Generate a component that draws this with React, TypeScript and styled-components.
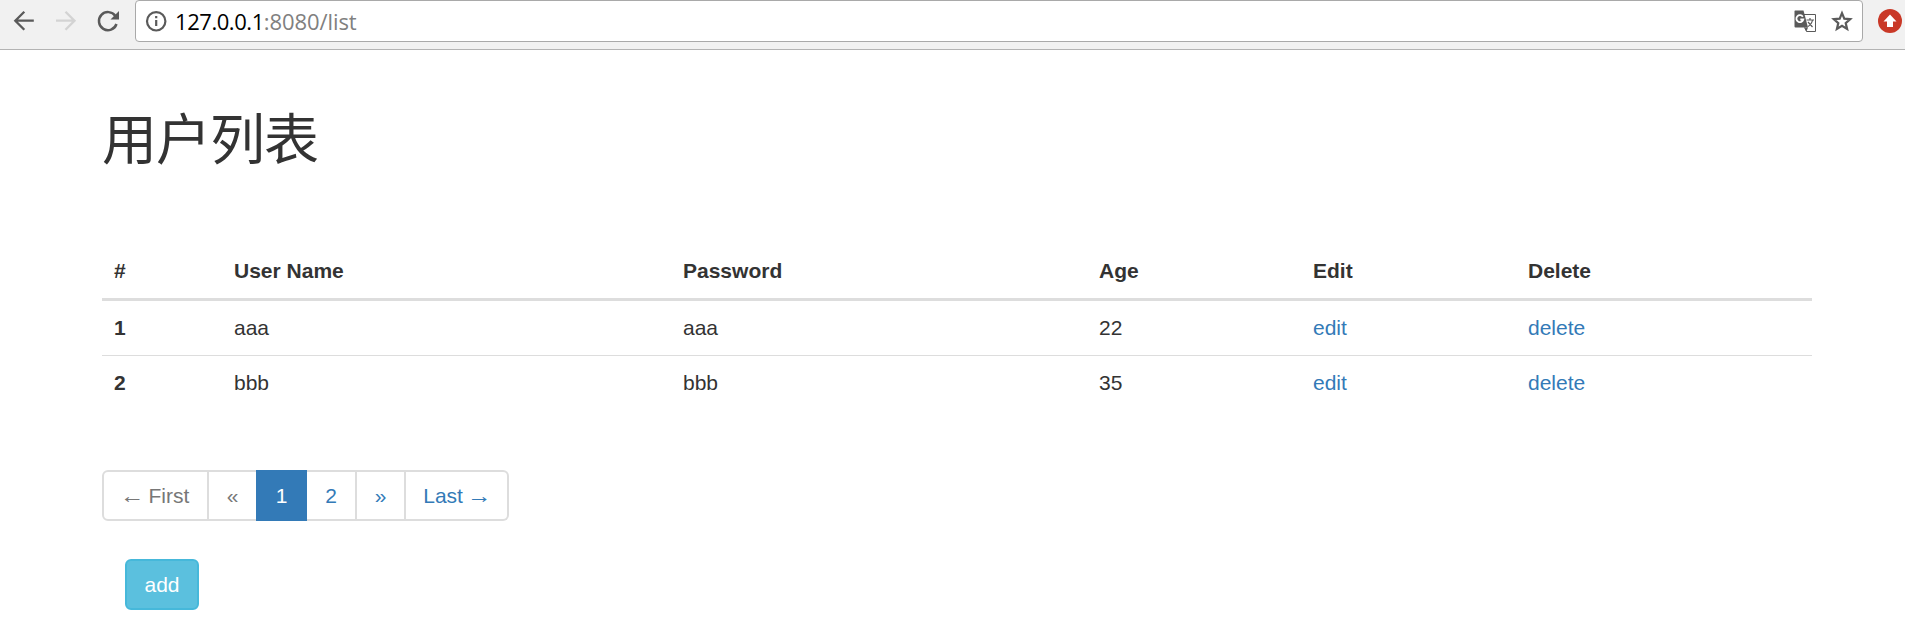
import React from "react";
import styled, { createGlobalStyle, css } from "styled-components";

const GlobalStyle = createGlobalStyle`
  * { box-sizing: border-box; }
  body {
    margin: 0;
    background: #fff;
    color: #333;
    font: 21px/30px "Liberation Sans", Arial, "Noto Sans CJK SC", sans-serif;
  }
`;

const BrowserBar = styled.header`
  display: flex;
  align-items: flex-start;
  height: 50px;
  background: #f1f1f1;
  border-bottom: 1px solid #b3b3b3;
`;

const NavButtons = styled.nav`
  display: flex;
  width: 135px;
  padding: 9px 0 0 12px;
  gap: 18px;
`;

const NavIcon = styled.svg<{ $muted?: boolean }>`
  width: 24px;
  height: 24px;
  color: ${(p) => (p.$muted ? "#d3d3d3" : "#5a5a5a")};
`;

const AddressBar = styled.div`
  display: flex;
  align-items: center;
  flex: 1;
  height: 42px;
  padding: 0 8px;
  background: #fff;
  border: 1px solid #a9a9a9;
  border-radius: 4px;
`;

const AddressText = styled.span`
  flex: 1;
  margin-left: 7px;
  color: #808080;
  font: 22px/36px "Open Sans", "Noto Sans", sans-serif;
  letter-spacing: -0.08px;
`;

const Host = styled.span`
  color: #000;
  letter-spacing: -0.45px;
`;

const AddressActions = styled.div`
  display: flex;
  gap: 13px;
`;

const Extension = styled.div`
  width: 42px;
  padding: 9px 0 0 15px;
`;

const Page = styled.main`
  width: 1710px;
  margin-left: 102px;
`;

const Title = styled.h1`
  margin: 0;
  padding-top: 52px;
  height: 191px;
  font: 400 55px/66px "Noto Sans CJK SC", sans-serif;
  letter-spacing: -1px;
`;

const UserTable = styled.table`
  width: 100%;
  table-layout: fixed;
  border-collapse: separate;
  border-spacing: 0;
`;

const HeadCell = styled.th`
  height: 60px;
  padding: 3px 12px 0;
  border-bottom: 3px solid #ddd;
  text-align: left;
  font-weight: 700;
`;

const Cell = styled.td`
  height: 54px;
  padding: 0 12px;
  tr + tr > & {
    height: 55px;
    border-top: 1px solid #ddd;
  }
`;

const IndexCell = styled(Cell).attrs({ as: "th" })`
  text-align: left;
  font-weight: 700;
`;

const Link = styled.a`
  color: #337ab7;
  text-decoration: none;
`;

const Pagination = styled.ul`
  display: flex;
  width: 407px;
  height: 51px;
  margin: 60px 0 38px;
  padding: 0;
  list-style: none;
`;

const PageItem = styled.li<{ $width: number; $state?: "active" | "disabled" }>`
  display: flex;
  align-items: center;
  justify-content: center;
  width: ${(p) => p.$width}px;
  border: 2px solid #ddd;
  border-left-width: 0;
  color: ${(p) => (p.$state === "disabled" ? "#777" : "#337ab7")};
  white-space: pre;
  &:first-child {
    border-left-width: 2px;
    border-radius: 6px 0 0 6px;
  }
  &:last-child {
    border-radius: 0 6px 6px 0;
  }
  &:nth-child(2) {
    border-right-width: 0;
  }
  ${(p) =>
    p.$state === "active" &&
    css`
      padding-left: 2px;
      background: #337ab7;
      border-color: #337ab7;
      color: #fff;
    `}
`;

const Arrow = styled.span`
  display: inline-block;
  transform: scaleX(1.16);
`;

const AddButton = styled.button`
  display: block;
  width: 74px;
  height: 51px;
  margin-left: 23px;
  padding: 0;
  border: 2px solid #46b8da;
  border-radius: 6px;
  background: #5bc0de;
  color: #fff;
  font: inherit;
`;

const columns: [string, number][] = [
  ["#", 120],
  ["User Name", 449],
  ["Password", 416],
  ["Age", 214],
  ["Edit", 215],
  ["Delete", 296],
];

const users = [
  { id: 1, name: "aaa", password: "aaa", age: 22 },
  { id: 2, name: "bbb", password: "bbb", age: 35 },
];

export default function App() {
  return (
    <>
      <GlobalStyle />
      <BrowserBar>
        <NavButtons>
          <NavIcon viewBox="0 0 24 24" fill="none" stroke="currentColor" strokeWidth="2.3">
            <path d="M21.8 11.700H3.500M12.300 2.700l-9 9 9 9" />
          </NavIcon>
          <NavIcon $muted viewBox="0 0 24 24" fill="none" stroke="currentColor" strokeWidth="2.3">
            <path d="M2 11.700h18.500M11.500 2.700l9 9-9 9" />
          </NavIcon>
          <NavIcon viewBox="0 0 24 24" fill="none" stroke="currentColor" strokeWidth="2.5">
            <path d="M19.400 7A9 9 0 1 0 20.500 15" />
            <path d="M23 2v8.500h-8.500z" fill="currentColor" stroke="none" />
          </NavIcon>
        </NavButtons>
        <AddressBar>
          <NavIcon viewBox="0 0 24 24" fill="none" stroke="currentColor" strokeWidth="2.2">
            <circle cx="12.200" cy="12.300" r="9.200" />
            <path d="M12.200 11v6M12.200 7v2.200" />
          </NavIcon>
          <AddressText>
            <Host>127.0.0.1</Host>:8080/list
          </AddressText>
          <AddressActions>
            <NavIcon viewBox="0 0 24 24">
              <path d="M10 5.500h12.500v17H13.500l-2-4" fill="#fff" stroke="currentColor" />
              <path d="M2 1.500h8.500l4.500 17H2.500a1 1 0 0 1-1-1V2z" fill="currentColor" />
              <path d="m11.500 18.500 2 4 1.500-4z" fill="currentColor" />
              <path d="M9.800 7.700A3.500 3.500 0 1 0 10.300 10.500H7.300" fill="none" stroke="#fff" strokeWidth="1.8" />
              <path d="M13.500 11h7.500M17 9v2M19.500 11c-.5 3-2 5-4.500 6.500M15 13l4.500 5" fill="none" stroke="currentColor" strokeWidth="1.200" />
            </NavIcon>
            <NavIcon viewBox="0 0 24 24" fill="none" stroke="currentColor" strokeWidth="2.200">
              <path d="m12 4.200 2.300 5.500 5.900.5-4.500 3.900 1.400 5.800-5.100-3.100-5.100 3.100 1.400-5.800-4.500-3.900 5.900-.5z" />
            </NavIcon>
          </AddressActions>
        </AddressBar>
        <Extension>
          <NavIcon viewBox="0 0 24 24">
            <circle cx="12" cy="12" r="12" fill="#c93827" />
            <path d="m12 5.500 6.500 7H15V18H9v-5.500H5.500z" fill="#fff" />
          </NavIcon>
        </Extension>
      </BrowserBar>
      <Page>
        <Title>用户列表</Title>
        <UserTable>
          <colgroup>
            {columns.map(([name, width]) => (
              <col key={name} width={width} />
            ))}
          </colgroup>
          <thead>
            <tr>
              {columns.map(([name]) => (
                <HeadCell key={name}>{name}</HeadCell>
              ))}
            </tr>
          </thead>
          <tbody>
            {users.map((u) => (
              <tr key={u.id}>
                <IndexCell>{u.id}</IndexCell>
                <Cell>{u.name}</Cell>
                <Cell>{u.password}</Cell>
                <Cell>{u.age}</Cell>
                <Cell><Link href="#">edit</Link></Cell>
                <Cell><Link href="#">delete</Link></Cell>
              </tr>
            ))}
          </tbody>
        </UserTable>
        <Pagination>
          <PageItem $width={107} $state="disabled"><Arrow>←</Arrow> First</PageItem>
          <PageItem $width={47} $state="disabled">«</PageItem>
          <PageItem $width={51} $state="active">1</PageItem>
          <PageItem $width={50}>2</PageItem>
          <PageItem $width={49}>»</PageItem>
          <PageItem $width={103}>Last <Arrow>→</Arrow></PageItem>
        </Pagination>
        <AddButton>add</AddButton>
      </Page>
    </>
  );
}
